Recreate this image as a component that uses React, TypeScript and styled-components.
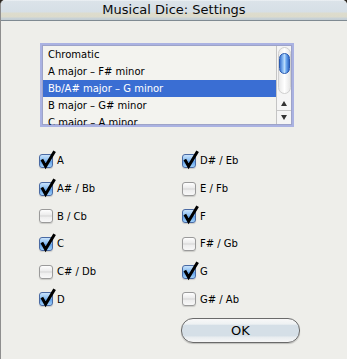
import React from "react";
import styled, { createGlobalStyle } from "styled-components";

const Global = createGlobalStyle`
  html, body { margin: 0; padding: 0; background: #2b2620; }
  body { width: 347px; height: 359px; overflow: hidden; }
  * { box-sizing: border-box; }
`;

const Window = styled.div`
  width: 347px;
  height: 359px;
  background: #eeeeea;
  border-radius: 5px 5px 0 0;
  border-left: 1px solid #8e8e8e;
  overflow: hidden;
  display: flex;
  flex-direction: column;
  font-family: "DejaVu Sans", "Liberation Sans", sans-serif;
  color: #000;
`;

const TitleBar = styled.div`
  height: 21px;
  flex: none;
  display: flex;
  align-items: center;
  justify-content: center;
  padding-bottom: 1px;
  font-size: 13px;
  color: #0a0a0a;
  border-bottom: 1px solid #7f8a92;
  background: linear-gradient(
    #f6f8fa 0px,
    #dbe3e9 1px,
    #d6dfe6 12px,
    #dddccd 13px,
    #dcdbcc 17px,
    #c9d3d8 18px,
    #c2ccd2 20px
  );
`;

const Content = styled.div`
  flex: 1;
  display: flex;
  flex-direction: column;
  padding: 22px 0 0 0;
`;

const ListBox = styled.div`
  margin-left: 39px;
  width: 254px;
  height: 84px;
  border: 2px solid #aab2e2;
  box-shadow: inset 0 0 0 1px #9da3c8;
  background: #f3f3ef;
  display: flex;
  overflow: hidden;
`;

const Rows = styled.div`
  flex: 1;
  padding-top: 1px;
  overflow: hidden;
`;

const Row = styled.div<{ $selected?: boolean }>`
  height: 17px;
  line-height: 17px;
  padding-left: 5px;
  margin-left: 1px;
  font-size: 10px;
  white-space: nowrap;
  background: ${(p) => (p.$selected ? "#3a6ed3" : "transparent")};
  color: ${(p) => (p.$selected ? "#fff" : "#000")};
`;

const Scrollbar = styled.div`
  width: 15px;
  flex: none;
  display: flex;
  flex-direction: column;
  border-left: 1px solid #c4c4c4;
  background: #f5f5f5;
  margin: 1px 1px 1px 0;
`;

const Groove = styled.div`
  flex: 1;
  margin: 1px 0 2px 1px;
  border-radius: 7px;
  border: 1px solid #d0d0d0;
  background: linear-gradient(90deg, #e9e9e9, #ffffff 50%, #e6e6e6);
  display: flex;
  flex-direction: column;
  padding-top: 5px;
`;

const Thumb = styled.div`
  height: 21px;
  border-radius: 7px;
  border: 1px solid #2a5bb0;
  background: linear-gradient(
    90deg,
    #3d74d0,
    #8fc0f6 35%,
    #b9dbfb 50%,
    #6aa6ee 70%,
    #2f66c4
  );
`;

const Arrow = styled.div<{ $down?: boolean }>`
  height: 14px;
  flex: none;
  display: flex;
  align-items: center;
  justify-content: center;
  border-top: ${(p) => (p.$down ? "1px solid #c8c8c8" : "none")};
  &::after {
    content: "";
    width: 0;
    height: 0;
    border-left: 3.5px solid transparent;
    border-right: 3.5px solid transparent;
    ${(p) =>
      p.$down
        ? "border-top: 5px solid #333;"
        : "border-bottom: 5px solid #333;"}
  }
`;

const Grid = styled.div`
  margin-top: 20px;
  padding-left: 38px;
  display: grid;
  grid-template-columns: 143px 143px;
  grid-auto-flow: column;
  grid-template-rows: repeat(6, 27.7px);
`;

const CheckRow = styled.label`
  display: flex;
  align-items: center;
  font-size: 10px;
  white-space: nowrap;
`;

const Box = styled.span<{ $checked: boolean }>`
  position: relative;
  width: 14px;
  height: 14px;
  flex: none;
  margin-right: 4px;
  border-radius: 3px;
  border: 1px solid ${(p) => (p.$checked ? "#4a6aa3" : "#9a9a9a")};
  background: ${(p) =>
    p.$checked
      ? "linear-gradient(#c9e3fc, #89bdf1 45%, #5f9fe8 52%, #9fd0fa)"
      : "linear-gradient(#fefefe, #ececec 40%, #d8d8d8 50%, #eeeeee 60%, #f8f8f8)"};
  box-shadow: 0 1px 1px rgba(0, 0, 0, 0.15);
`;

const Check = styled.svg`
  position: absolute;
  left: 0px;
  top: -5px;
  width: 16px;
  height: 18px;
  overflow: visible;
`;

const ButtonRow = styled.div`
  margin-top: 5px;
  padding-left: 180px;
`;

const OkButton = styled.button`
  width: 119px;
  height: 25px;
  border-radius: 12px;
  border: 1px solid #6a6a6a;
  font-family: "DejaVu Sans", "Liberation Sans", sans-serif;
  font-size: 13px;
  color: #000;
  padding: 0;
  background: linear-gradient(
    #f8f8f8 0%,
    #eef1f3 22%,
    #d5dfe7 28%,
    #d5dfe7 72%,
    #e9edf0 80%,
    #f6f6f6 100%
  );
  box-shadow: 0 1px 1px rgba(0, 0, 0, 0.2);
`;

const items = [
  "Chromatic",
  "A major \u2013 F# minor",
  "Bb/A# major \u2013 G minor",
  "B major \u2013 G# minor",
  "C major \u2013 A minor",
];

const notes: [string, boolean][] = [
  ["A", true],
  ["A# / Bb", true],
  ["B / Cb", false],
  ["C", true],
  ["C# / Db", false],
  ["D", true],
  ["D# / Eb", true],
  ["E / Fb", false],
  ["F", true],
  ["F# / Gb", false],
  ["G", true],
  ["G# / Ab", false],
];

function CheckItem({ label, checked }: { label: string; checked: boolean }) {
  return (
    <CheckRow>
      <Box $checked={checked}>
        {checked && (
          <Check viewBox="0 0 16 18">
            <path
              d="M1.8 9.5 L5.6 16.3 L14.6 1.2"
              fill="none"
              stroke="#000"
              strokeWidth="3"
              strokeLinejoin="miter"
            />
          </Check>
        )}
      </Box>
      {label}
    </CheckRow>
  );
}

export default function App() {
  return (
    <>
      <Global />
      <Window>
        <TitleBar>Musical Dice: Settings</TitleBar>
        <Content>
          <ListBox>
            <Rows>
              {items.map((t, i) => (
                <Row key={t} $selected={i === 2}>
                  {t}
                </Row>
              ))}
            </Rows>
            <Scrollbar>
              <Groove>
                <Thumb />
              </Groove>
              <Arrow />
              <Arrow $down />
            </Scrollbar>
          </ListBox>
          <Grid>
            {notes.map(([l, c]) => (
              <CheckItem key={l} label={l} checked={c} />
            ))}
          </Grid>
          <ButtonRow>
            <OkButton>OK</OkButton>
          </ButtonRow>
        </Content>
      </Window>
    </>
  );
}
